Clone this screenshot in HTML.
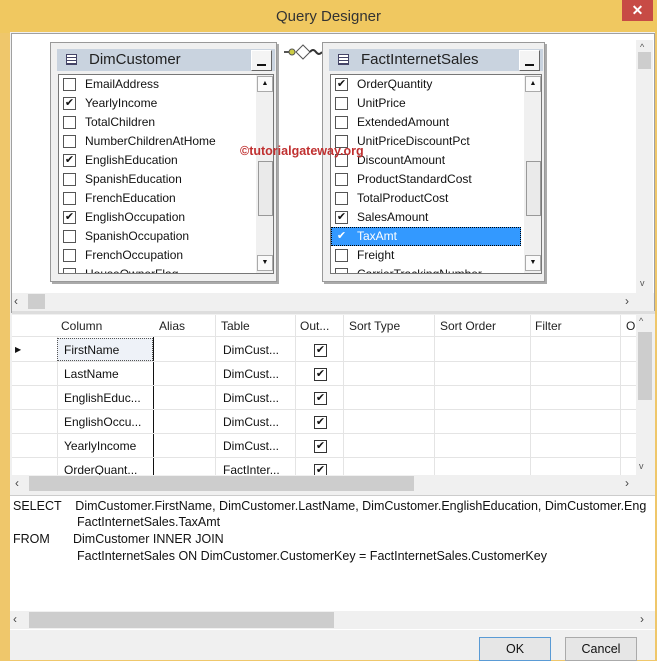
<!DOCTYPE html>
<html><head><style>
*{box-sizing:border-box;margin:0;padding:0}
body{width:657px;height:660px;overflow:hidden;background:#efc76b;font-family:"Liberation Sans",sans-serif;font-size:12px;color:#111;position:relative}
.a{position:absolute}
.title{left:0;top:0;width:657px;height:33px;text-align:center;line-height:34px;font-size:15px;color:#333;background:#f0c860}
.close{left:622px;top:0;width:31px;height:21px;background:#c74b45;color:#fff;text-align:center;line-height:21px;font-size:14px;font-weight:bold}
.client{left:10px;top:32px;width:645px;height:628px;background:#f0f0f0}
.pane{background:#fff;border:1px solid #a0a0a0}
.sb{background:#f0f0f0}
.thumb{background:#cdcdcd}
.box{border:1px solid #999;background:#f0f0f0;box-shadow:2px 2px 0 #aaa}
.hdr{background:#c9d3df;height:22px;font-size:15px;line-height:22px;padding-left:32px;color:#222}
.ti{position:absolute;left:9px;top:5px;width:11px;height:11px;border:1px solid #446;background:repeating-linear-gradient(0deg,#446 0 1px,#fff 1px 3px)}
.min{position:absolute;width:21px;height:21px;background:#f4f4f4;border:1px solid #888;border-color:#fff #666 #666 #fff;top:1px}
.min:after{content:"";position:absolute;left:5px;bottom:4px;width:9px;height:2px;background:#111}
.list{background:#fff;border:1px solid #777;overflow:hidden}
.row{height:19px;line-height:19px;font-size:12px;padding-left:26px;position:relative;white-space:nowrap}
.cb{position:absolute;left:4px;top:3px;width:13px;height:13px;border:1px solid #555;background:#fff;font-size:11px;line-height:11px;text-align:center}
.sel{background:#3399ff;color:#fff;outline:1px dotted #000;outline-offset:-1px}
.vs{position:absolute;background:#f0f0f0}
.arr{position:absolute;width:16px;height:16px;border:1px solid #aaa;background:#fafafa;font-size:7px;text-align:center;line-height:14px}
.g div{position:absolute}
.gh{top:0;height:22px;line-height:22px;font-size:12px;color:#222}
.gc{font-size:12px;height:24px;line-height:24px}
.ck{width:13px;height:13px;border:1px solid #333;background:#fff;font-size:11px;line-height:11px;text-align:center}
.sql{font-size:12.5px;line-height:17px;white-space:pre;color:#111}
.btn{border:1px solid #aaa;background:#e6e6e6;text-align:center;line-height:22px;font-size:12.5px}
</style></head><body>
<div class="a title">Query Designer</div>
<div class="a close">✕</div>
<div class="a client"></div>

<div class="a pane" style="left:11px;top:33px;width:644px;height:280px"></div>
<div class="a" style="left:636px;top:40px;width:17px;height:254px;background:#f0f0f0"></div>
<div class="a" style="left:640px;top:42px;font-size:9px;color:#555">^</div>
<div class="a thumb" style="left:638px;top:52px;width:13px;height:17px"></div>
<div class="a" style="left:640px;top:278px;font-size:9px;color:#555">v</div>
<div class="a sb" style="left:12px;top:293px;width:642px;height:18px"></div>
<div class="a thumb" style="left:28px;top:294px;width:17px;height:15px"></div>
<div class="a" style="left:14px;top:294px;font-size:12px;color:#444">‹</div>
<div class="a" style="left:625px;top:294px;font-size:12px;color:#444">›</div>
<div class="a" style="left:12px;top:311px;width:643px;height:3px;background:#ddd"></div>

<svg class="a" style="left:282px;top:42px" width="40" height="20"><line x1="2" y1="10" x2="12" y2="10" stroke="#555" stroke-width="2"/><circle cx="10" cy="10" r="3" fill="#cc4" stroke="#555"/><polygon points="14,10 21,3 28,10 21,17" fill="#fff" stroke="#555"/><path d="M28 10 q3 -4 6 0 q3 4 6 0" fill="none" stroke="#333" stroke-width="2"/></svg>

<div class="a box" style="left:50px;top:42px;width:227px;height:240px">
 <div class="hdr" style="margin:6px 0 0 6px;width:218px;position:relative"><span class="ti"></span>DimCustomer<span class="min" style="left:194px"></span></div>
 <div class="list a" style="left:7px;top:31px;width:216px;height:200px">
  <div class="row"><span class="cb"></span>EmailAddress</div>
  <div class="row"><span class="cb">✔</span>YearlyIncome</div>
  <div class="row"><span class="cb"></span>TotalChildren</div>
  <div class="row"><span class="cb"></span>NumberChildrenAtHome</div>
  <div class="row"><span class="cb">✔</span>EnglishEducation</div>
  <div class="row"><span class="cb"></span>SpanishEducation</div>
  <div class="row"><span class="cb"></span>FrenchEducation</div>
  <div class="row"><span class="cb">✔</span>EnglishOccupation</div>
  <div class="row"><span class="cb"></span>SpanishOccupation</div>
  <div class="row"><span class="cb"></span>FrenchOccupation</div>
  <div class="row"><span class="cb"></span>HouseOwnerFlag</div>
  <div class="vs" style="left:197px;top:0;width:17px;height:198px"></div>
  <div class="arr" style="left:198px;top:1px">▲</div>
  <div class="a" style="left:199px;top:86px;width:15px;height:55px;border:1px solid #999;background:#eaeaea"></div>
  <div class="arr" style="left:198px;top:180px">▼</div>
 </div>
</div>

<div class="a box" style="left:322px;top:42px;width:223px;height:240px">
 <div class="hdr" style="margin:6px 0 0 6px;width:214px;position:relative"><span class="ti"></span>FactInternetSales<span class="min" style="left:190px"></span></div>
 <div class="list a" style="left:7px;top:31px;width:212px;height:200px">
  <div class="row"><span class="cb">✔</span>OrderQuantity</div>
  <div class="row"><span class="cb"></span>UnitPrice</div>
  <div class="row"><span class="cb"></span>ExtendedAmount</div>
  <div class="row"><span class="cb"></span>UnitPriceDiscountPct</div>
  <div class="row"><span class="cb"></span>DiscountAmount</div>
  <div class="row"><span class="cb"></span>ProductStandardCost</div>
  <div class="row"><span class="cb"></span>TotalProductCost</div>
  <div class="row"><span class="cb">✔</span>SalesAmount</div>
  <div class="row sel" style="width:190px"><span class="cb" style="background:#3399ff;border-color:#3399ff;color:#fff">✔</span>TaxAmt</div>
  <div class="row"><span class="cb"></span>Freight</div>
  <div class="row"><span class="cb"></span>CarrierTrackingNumber</div>
  <div class="vs" style="left:193px;top:0;width:17px;height:198px"></div>
  <div class="arr" style="left:194px;top:1px">▲</div>
  <div class="a" style="left:195px;top:86px;width:15px;height:55px;border:1px solid #999;background:#eaeaea"></div>
  <div class="arr" style="left:194px;top:180px">▼</div>
 </div>
</div>
<div class="a" style="left:240px;top:144px;color:#c03030;font-weight:bold;font-size:12.5px">©tutorialgateway.org</div>

<div class="a g" style="left:12px;top:315px;width:643px;height:178px;background:#fff">
 <div style="left:0;top:0;width:643px;height:22px;background:#fff;border-bottom:1px solid #e4e4e4"></div>
 <div class="gh" style="left:49px">Column</div>
 <div class="gh" style="left:147px">Alias</div>
 <div class="gh" style="left:209px">Table</div>
 <div class="gh" style="left:288px">Out...</div>
 <div class="gh" style="left:337px">Sort Type</div>
 <div class="gh" style="left:428px">Sort Order</div>
 <div class="gh" style="left:523px">Filter</div>
 <div class="gh" style="left:614px">O</div>
 <div style="left:45px;top:22px;width:1px;height:138px;background:#e4e4e4"></div>
 <div style="left:141px;top:22px;width:1px;height:138px;background:#111"></div>
 <div style="left:203px;top:0;width:1px;height:160px;background:#e4e4e4"></div>
 <div style="left:283px;top:0;width:1px;height:160px;background:#e4e4e4"></div>
 <div style="left:331px;top:0;width:1px;height:160px;background:#e4e4e4"></div>
 <div style="left:422px;top:0;width:1px;height:160px;background:#e4e4e4"></div>
 <div style="left:518px;top:0;width:1px;height:160px;background:#e4e4e4"></div>
 <div style="left:608px;top:0;width:1px;height:160px;background:#e4e4e4"></div>
 <div style="left:0;top:46px;width:625px;height:1px;background:#e4e4e4"></div>
 <div style="left:0;top:70px;width:625px;height:1px;background:#e4e4e4"></div>
 <div style="left:0;top:94px;width:625px;height:1px;background:#e4e4e4"></div>
 <div style="left:0;top:118px;width:625px;height:1px;background:#e4e4e4"></div>
 <div style="left:0;top:142px;width:625px;height:1px;background:#e4e4e4"></div>
 <div style="left:45px;top:23px;width:96px;height:23px;border:1px dotted #555;background:#eef2f8"></div>
 <div style="left:3px;top:30px;font-size:8px">▶</div>
 <div class="gc" style="left:52px;top:23px">FirstName</div><div class="gc" style="left:211px;top:23px">DimCust...</div><div class="ck" style="left:302px;top:29px">✔</div>
 <div class="gc" style="left:52px;top:47px">LastName</div><div class="gc" style="left:211px;top:47px">DimCust...</div><div class="ck" style="left:302px;top:53px">✔</div>
 <div class="gc" style="left:52px;top:71px">EnglishEduc...</div><div class="gc" style="left:211px;top:71px">DimCust...</div><div class="ck" style="left:302px;top:77px">✔</div>
 <div class="gc" style="left:52px;top:95px">EnglishOccu...</div><div class="gc" style="left:211px;top:95px">DimCust...</div><div class="ck" style="left:302px;top:101px">✔</div>
 <div class="gc" style="left:52px;top:119px">YearlyIncome</div><div class="gc" style="left:211px;top:119px">DimCust...</div><div class="ck" style="left:302px;top:125px">✔</div>
 <div class="gc" style="left:52px;top:143px;height:17px;overflow:hidden">OrderQuant...</div><div class="gc" style="left:211px;top:143px;height:17px;overflow:hidden">FactInter...</div><div class="ck" style="left:302px;top:149px;height:11px;border-bottom:none;overflow:hidden">✔</div>
 <div style="left:624px;top:0;width:19px;height:160px;background:#f0f0f0"></div>
 <div style="left:627px;top:1px;font-size:9px;color:#555">^</div>
 <div style="left:626px;top:17px;width:14px;height:68px;background:#cdcdcd"></div>
 <div style="left:627px;top:146px;font-size:9px;color:#555">v</div>
 <div style="left:0;top:160px;width:643px;height:18px;background:#f0f0f0"></div>
 <div style="left:17px;top:161px;width:385px;height:15px;background:#cdcdcd"></div>
 <div style="left:3px;top:161px;font-size:12px;color:#444">‹</div>
 <div style="left:613px;top:161px;font-size:12px;color:#444">›</div>
</div>

<div class="a" style="left:10px;top:495px;width:645px;height:135px;background:#fff;border-top:1px solid #ccc"></div>
<div class="a sql" style="left:13px;top:498px">SELECT    DimCustomer.FirstName, DimCustomer.LastName, DimCustomer.EnglishEducation, DimCustomer.Eng</div>
<div class="a sql" style="left:77px;top:514px">FactInternetSales.TaxAmt</div>
<div class="a sql" style="left:13px;top:531px">FROM</div>
<div class="a sql" style="left:73px;top:531px">DimCustomer INNER JOIN</div>
<div class="a sql" style="left:77px;top:548px">FactInternetSales ON DimCustomer.CustomerKey = FactInternetSales.CustomerKey</div>
<div class="a sb" style="left:10px;top:611px;width:645px;height:18px"></div>
<div class="a thumb" style="left:29px;top:612px;width:305px;height:16px"></div>
<div class="a" style="left:13px;top:612px;font-size:12px;color:#444">‹</div>
<div class="a" style="left:640px;top:612px;font-size:12px;color:#444">›</div>

<div class="a btn" style="left:479px;top:637px;width:72px;height:24px;border-color:#5a9bd5">OK</div>
<div class="a btn" style="left:565px;top:637px;width:72px;height:24px">Cancel</div>
</body></html>
